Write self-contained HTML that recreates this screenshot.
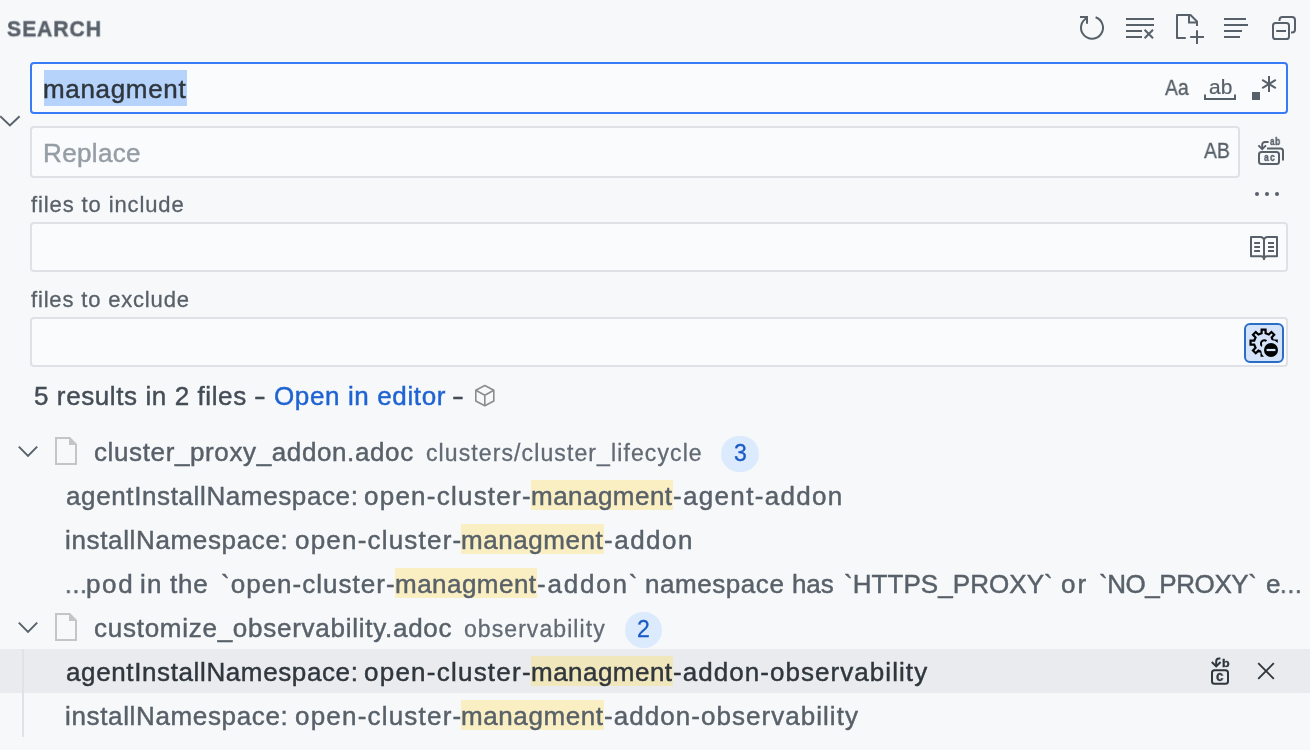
<!DOCTYPE html>
<html lang="en"><head><meta charset="utf-8"><title>Search</title>
<style>
html,body{margin:0;padding:0;}
body{width:1310px;height:750px;background:#f6f8fa;overflow:hidden;position:relative;font-family:"Liberation Sans",sans-serif;}
.b{position:absolute;box-sizing:border-box;display:block;}
.row{position:static;margin:0;padding:0;}
.t{display:block;position:absolute;white-space:pre;margin:0;will-change:transform;}
svg{overflow:visible;stroke-linecap:butt;}
</style></head><body>
<div class="t" style="left:6.60px;top:12.20px;font-size:22px;line-height:33px;color:#586069;transform:scale(0.9606,1.03);transform-origin:0 23.2px;font-weight:bold;-webkit-text-stroke:0.3px currentColor;-webkit-text-stroke:0.45px #586069;letter-spacing:1.0px;">SEARCH</div>
<svg class="b" style="left:1074px;top:10px" width="36" height="36" viewBox="1074 10 36 36" fill="none" stroke="#586069" stroke-width="2" ><path d="M1087.2 17.8A11 11 0 1 0 1095.6 17.3"/><path d="M1080 17H1087V23.8"/></svg>
<svg class="b" style="left:1122px;top:12px" width="36" height="30" viewBox="1122 12 36 30" fill="none" stroke="#586069" stroke-width="2" ><path d="M1126 19H1154M1126 25H1154M1126 31H1142M1126 37H1142"/><path d="M1144.6 29.8L1153 38.2M1153 29.8L1144.6 38.2"/></svg>
<svg class="b" style="left:1172px;top:10px" width="36" height="38" viewBox="1172 10 36 38" fill="none" stroke="#586069" stroke-width="2" ><path d="M1185.8 38H1177V15H1190.5L1197 21.5V26" stroke-linejoin="round"/><path d="M1189 15V22.5H1197"/><path d="M1190.2 37H1204M1197 30.2V44"/></svg>
<svg class="b" style="left:1220px;top:12px" width="32" height="30" viewBox="1220 12 32 30" fill="none" stroke="#586069" stroke-width="2" ><path d="M1224 19H1246M1224 25H1248M1224 31H1242M1224 37H1240"/></svg>
<svg class="b" style="left:1268px;top:12px" width="32" height="32" viewBox="1268 12 32 32" fill="none" stroke="#586069" stroke-width="2" ><path d="M1279.5 21V20A3 3 0 0 1 1282.5 17H1292A3 3 0 0 1 1295 20V29.5A3 3 0 0 1 1292 32.5H1291"/><rect x="1273" y="23" width="16" height="16" rx="2.6"/><path d="M1276.2 31H1286"/></svg>
<svg class="b" style="left:0px;top:110px" width="22" height="22" viewBox="0 110 22 22" fill="none" stroke="#586069" stroke-width="1.9" ><path d="M0.2 116.2L9.9 125.4L19.600 116.2"/></svg>
<div class="b" style="left:30px;top:62px;width:1258px;height:52px;background:#fafbfc;border:2px solid #377cf6;border-radius:4px;"></div>
<div class="b" style="left:44px;top:70px;width:143px;height:36px;background:#b5d3fb;"></div>
<div class="t " style="left:43.38px;top:70.30px;font-size:26px;line-height:39px;letter-spacing:0.672px;color:#2f363d;-webkit-text-stroke:0.45px currentColor;">managment</div>
<div class="t" style="left:1164.60px;top:71.40px;font-size:22px;line-height:33px;color:#586069;transform:scale(0.8781,1.0);transform-origin:0 23.2px;-webkit-text-stroke:0.3px currentColor;">Aa</div>
<div class="t" style="left:1208.52px;top:72.20px;font-size:20px;line-height:30px;color:#586069;transform:scale(1.0458,1.0);transform-origin:0 21.2px;-webkit-text-stroke:0.2px currentColor;">ab</div>
<svg class="b" style="left:1200px;top:90px" width="40" height="14" viewBox="1200 90 40 14" fill="none" stroke="#586069" stroke-width="2" ><path d="M1205 94.4V99H1235V94.4"/></svg>
<div class="b" style="left:1252px;top:92px;width:8px;height:8px;background:#586069;"></div>
<svg class="b" style="left:1258px;top:72px" width="22" height="24" viewBox="1258 72 22 24" fill="none" stroke="#586069" stroke-width="2" ><path d="M1269 76V92M1262.2 79.8L1275.8 88.2M1275.8 79.8L1262.2 88.2"/></svg>
<div class="b" style="left:30px;top:126px;width:1210px;height:52px;background:#fafbfc;border:2px solid #dfe1e6;border-radius:4px;"></div>
<div class="t " style="left:43.48px;top:134.30px;font-size:26px;line-height:39px;letter-spacing:0.358px;color:#959da5;-webkit-text-stroke:0.45px currentColor;">Replace</div>
<div class="t" style="left:1204.20px;top:134.20px;font-size:22px;line-height:33px;color:#586069;transform:scale(0.8779,1.0);transform-origin:0 23.2px;-webkit-text-stroke:0.3px currentColor;">AB</div>
<svg class="b" style="left:1254px;top:134px" width="34" height="34" viewBox="1254 134 34 34" fill="none" stroke="#586069" stroke-width="2" ><rect x="1259" y="152" width="20" height="12" rx="2.5"/><path d="M1267 148.5H1280.5A2.5 2.5 0 0 1 1283 151V160.5"/><path d="M1268.6 142H1265A2.8 2.8 0 0 0 1262.2 144.8V149"/><path d="M1258.4 145.4L1262.2 149.2L1266 145.4"/></svg>
<div class="row"><span class="t" style="left:1270.00px;top:134.00px;font-size:10px;line-height:15px;color:#586069;transform:scale(0.8186,1.0);transform-origin:0 10.2px;font-weight:bold;-webkit-text-stroke:0.3px currentColor;">a</span><span class="t" style="left:1275.26px;top:134.00px;font-size:10px;line-height:15px;color:#586069;transform:scale(0.8585,1.0);transform-origin:0 10.2px;font-weight:bold;-webkit-text-stroke:0.3px currentColor;">b</span></div>
<div class="row"><span class="t" style="left:1264.01px;top:149.40px;font-size:11px;line-height:16px;color:#586069;transform:scale(0.7667,1.0);transform-origin:0 11.2px;font-weight:bold;-webkit-text-stroke:0.3px currentColor;">a</span><span class="t" style="left:1269.90px;top:149.40px;font-size:11px;line-height:16px;color:#586069;transform:scale(0.8000,1.0);transform-origin:0 11.2px;font-weight:bold;-webkit-text-stroke:0.3px currentColor;">c</span></div>
<svg class="b" style="left:1250px;top:188px" width="34" height="12" viewBox="1250 188 34 12" fill="#586069" stroke="#586069" stroke-width="0" style2=""><circle cx="1257" cy="194" r="2"/><circle cx="1267" cy="194" r="2"/><circle cx="1277" cy="194" r="2"/></svg>
<div class="t " style="left:30.55px;top:188.20px;font-size:22px;line-height:33px;letter-spacing:0.882px;color:#586069;-webkit-text-stroke:0.3px currentColor;">files to include</div>
<div class="b" style="left:30px;top:222px;width:1258px;height:50px;background:#fafbfc;border:2px solid #dfe1e6;border-radius:4px;"></div>
<svg class="b" style="left:1246px;top:232px" width="36" height="32" viewBox="1246 232 36 32" fill="none" stroke="#586069" stroke-width="2" ><path d="M1264 240.5V259"/><path d="M1251 237H1260.5A3.5 3.500 0 0 1 1264 240.500A3.5 3.500 0 0 1 1267.5 237H1277V256.300H1267A3 3 0 0 0 1264 259.300A3 3 0 0 0 1261 256.300H1251Z" stroke-linejoin="round"/><path d="M1254.200 243H1260M1254.200 247H1260M1254.200 251H1260M1268 243H1274M1268 247H1274M1268 251H1274"/></svg>
<div class="t " style="left:30.55px;top:283.20px;font-size:22px;line-height:33px;letter-spacing:0.828px;color:#586069;-webkit-text-stroke:0.3px currentColor;">files to exclude</div>
<div class="b" style="left:30px;top:317px;width:1258px;height:50px;background:#fafbfc;border:2px solid #dfe1e6;border-radius:4px;"></div>
<div class="b" style="left:1244px;top:323px;width:40px;height:40px;background:#d4e3fa;border:2px solid #2a6dc4;border-radius:6px;"></div>
<svg class="b" style="left:1244px;top:323px" width="40" height="40" viewBox="1244 323 40 40" fill="none" stroke="#000" stroke-width="2.2"><defs><mask id="gm"><rect x="1244" y="323" width="40" height="40" fill="#fff"/><circle cx="1271" cy="350" r="8.800" fill="#000"/></mask></defs><g mask="url(#gm)"><path d="M1261.64 329.55L1265.56 329.55L1265.62 333.22L1268.81 334.54L1271.44 331.98L1274.22 334.76L1271.66 337.39L1272.98 340.58L1276.65 340.64L1276.65 344.56L1272.98 344.62L1271.66 347.81L1274.22 350.44L1271.44 353.22L1268.81 350.66L1265.62 351.98L1265.56 355.65L1261.64 355.65L1261.58 351.98L1258.39 350.66L1255.76 353.22L1252.98 350.44L1255.54 347.81L1254.22 344.62L1250.55 344.56L1250.55 340.64L1254.22 340.58L1255.54 337.39L1252.98 334.76L1255.76 331.98L1258.39 334.54L1261.58 333.22Z" stroke-linejoin="miter"/><path d="M1266.500 341.200A3.300 3.300 0 1 0 1262.200 346.200" stroke-width="2"/></g><circle cx="1271" cy="350" r="7" fill="#000" stroke="none"/><path d="M1266.600 350H1275.400" stroke="#d4e3fa" stroke-width="2.200"/></svg>
<div class="row"><span class="t " style="left:34.00px;top:376.90px;font-size:26px;line-height:39px;letter-spacing:0.595px;color:#444c56;-webkit-text-stroke:0.45px currentColor;">5 results in 2 files</span> <span class="t" style="left:254.08px;top:376.90px;font-size:26px;line-height:39px;color:#444c56;transform:scale(1.3538,1.0);transform-origin:0 27.7px;-webkit-text-stroke:0.45px currentColor;">-</span> <span class="t " style="left:273.68px;top:376.90px;font-size:26px;line-height:39px;letter-spacing:0.619px;color:#1f63d2;-webkit-text-stroke:0.45px currentColor;">Open in editor</span> <span class="t" style="left:452.36px;top:376.90px;font-size:26px;line-height:39px;color:#444c56;transform:scale(1.3692,1.0);transform-origin:0 27.7px;-webkit-text-stroke:0.45px currentColor;">-</span></div>
<svg class="b" style="left:470px;top:380px" width="30" height="32" viewBox="470 380 30 32" fill="none" stroke="#8c8c8c" stroke-width="1.6" ><path d="M484.800 385.500L493.800 390.300V401L484.800 405.800L475.800 401V390.300Z" stroke-linejoin="round"/><path d="M475.800 390.300L484.800 395.300L493.800 390.300M484.800 395.300V405.800" stroke-linejoin="round"/></svg>
<svg class="b" style="left:14px;top:439px" width="28" height="24" viewBox="14 439 28 24" fill="none" stroke="#586069" stroke-width="1.9" ><path d="M18.8 446.6L28 455.8L37.2 446.6"/></svg>
<svg class="b" style="left:52px;top:435px" width="28" height="32" viewBox="52 435 28 32" fill="none" stroke="#c5c5c5" stroke-width="2" ><path d="M56 438H69.600L76 444.4V464H56Z"/><path d="M69 438V445H76Z" fill="#c5c5c5" stroke="none"/></svg>
<div class="t " style="left:94.40px;top:432.70px;font-size:26px;line-height:39px;letter-spacing:0.618px;color:#586069;-webkit-text-stroke:0.45px currentColor;">cluster_proxy_addon.adoc</div>
<div class="t " style="left:425.52px;top:436.00px;font-size:23px;line-height:34px;letter-spacing:1.107px;color:#626a74;-webkit-text-stroke:0.3px currentColor;">clusters/cluster_lifecycle</div>
<div class="b" style="left:721px;top:435.6px;width:38px;height:36.0px;background:#dceafd;border-radius:18px;"></div>
<div class="t " style="left:733.62px;top:436.00px;font-size:23px;line-height:34px;letter-spacing:0.000px;color:#1a5ac4;-webkit-text-stroke:0.3px currentColor;">3</div>
<div class="b" style="left:531px;top:480px;width:142px;height:30px;background:#faefc3;"></div>
<div class="row"><span class="t " style="left:65.60px;top:477.10px;font-size:26px;line-height:39px;letter-spacing:0.618px;color:#586069;-webkit-text-stroke:0.45px currentColor;">agentInstallNamespace:</span> <span class="t " style="left:364.20px;top:477.10px;font-size:26px;line-height:39px;letter-spacing:1.237px;color:#586069;-webkit-text-stroke:0.45px currentColor;">open-cluster-</span><span class="t " style="left:530.77px;top:477.10px;font-size:26px;line-height:39px;letter-spacing:0.472px;color:#586069;-webkit-text-stroke:0.45px currentColor;">managment</span><span class="t " style="left:673.48px;top:477.10px;font-size:26px;line-height:39px;letter-spacing:1.327px;color:#586069;-webkit-text-stroke:0.45px currentColor;">-agent-addon</span></div>
<div class="b" style="left:461px;top:524px;width:142.60000000000002px;height:30px;background:#faefc3;"></div>
<div class="row"><span class="t " style="left:65.17px;top:521.10px;font-size:26px;line-height:39px;letter-spacing:0.644px;color:#586069;-webkit-text-stroke:0.45px currentColor;">installNamespace:</span> <span class="t " style="left:294.60px;top:521.10px;font-size:26px;line-height:39px;letter-spacing:1.204px;color:#586069;-webkit-text-stroke:0.45px currentColor;">open-cluster-</span><span class="t " style="left:460.77px;top:521.10px;font-size:26px;line-height:39px;letter-spacing:0.547px;color:#586069;-webkit-text-stroke:0.45px currentColor;">managment</span><span class="t " style="left:604.08px;top:521.10px;font-size:26px;line-height:39px;letter-spacing:1.510px;color:#586069;-webkit-text-stroke:0.45px currentColor;">-addon</span></div>
<div class="b" style="left:395px;top:568px;width:142px;height:30px;background:#faefc3;"></div>
<div class="row"><span class="t" style="left:64.09px;top:565.10px;font-size:26px;line-height:39px;color:#586069;transform:scale(0.9158,1.0);transform-origin:0 27.7px;-webkit-text-stroke:0.45px currentColor;">…</span><span class="t " style="left:86.38px;top:565.10px;font-size:26px;line-height:39px;letter-spacing:1.638px;color:#586069;-webkit-text-stroke:0.45px currentColor;">pod</span> <span class="t " style="left:140.18px;top:565.10px;font-size:26px;line-height:39px;letter-spacing:1.200px;color:#586069;-webkit-text-stroke:0.45px currentColor;">in</span> <span class="t " style="left:169.93px;top:565.10px;font-size:26px;line-height:39px;letter-spacing:0.837px;color:#586069;-webkit-text-stroke:0.45px currentColor;">the</span> <span class="t " style="left:220.95px;top:565.10px;font-size:26px;line-height:39px;letter-spacing:1.021px;color:#586069;-webkit-text-stroke:0.45px currentColor;">`open-cluster-</span><span class="t " style="left:394.77px;top:565.10px;font-size:26px;line-height:39px;letter-spacing:0.472px;color:#586069;-webkit-text-stroke:0.45px currentColor;">managment</span><span class="t " style="left:537.27px;top:565.10px;font-size:26px;line-height:39px;letter-spacing:1.796px;color:#586069;-webkit-text-stroke:0.45px currentColor;">-addon`</span> <span class="t " style="left:645.17px;top:565.10px;font-size:26px;line-height:39px;letter-spacing:0.556px;color:#586069;-webkit-text-stroke:0.45px currentColor;">namespace</span> <span class="t " style="left:791.65px;top:565.10px;font-size:26px;line-height:39px;letter-spacing:-0.125px;color:#586069;-webkit-text-stroke:0.45px currentColor;">has</span> <span class="t " style="left:843.75px;top:565.10px;font-size:26px;line-height:39px;letter-spacing:0.060px;color:#586069;-webkit-text-stroke:0.45px currentColor;">`HTTPS_PROXY`</span> <span class="t " style="left:1060.80px;top:565.10px;font-size:26px;line-height:39px;letter-spacing:2.050px;color:#586069;-webkit-text-stroke:0.45px currentColor;">or</span> <span class="t " style="left:1098.75px;top:565.10px;font-size:26px;line-height:39px;letter-spacing:-0.436px;color:#586069;-webkit-text-stroke:0.45px currentColor;">`NO_PROXY`</span> <span class="t " style="left:1265.60px;top:565.10px;font-size:26px;line-height:39px;letter-spacing:0.000px;color:#586069;-webkit-text-stroke:0.45px currentColor;">e</span><span class="t" style="left:1278.81px;top:565.10px;font-size:26px;line-height:39px;color:#586069;transform:scale(0.9105,1.0);transform-origin:0 27.7px;-webkit-text-stroke:0.45px currentColor;">…</span></div>
<svg class="b" style="left:14px;top:615px" width="28" height="24" viewBox="14 615 28 24" fill="none" stroke="#586069" stroke-width="1.9" ><path d="M18.8 622.6L28 631.8L37.2 622.6"/></svg>
<svg class="b" style="left:52px;top:611px" width="28" height="32" viewBox="52 611 28 32" fill="none" stroke="#c5c5c5" stroke-width="2" ><path d="M56 614H69.600L76 620.4V640H56Z"/><path d="M69 614V621H76Z" fill="#c5c5c5" stroke="none"/></svg>
<div class="t " style="left:94.40px;top:608.70px;font-size:26px;line-height:39px;letter-spacing:0.736px;color:#586069;-webkit-text-stroke:0.45px currentColor;">customize_observability.adoc</div>
<div class="t " style="left:463.52px;top:612.00px;font-size:23px;line-height:34px;letter-spacing:1.067px;color:#626a74;-webkit-text-stroke:0.3px currentColor;">observability</div>
<div class="b" style="left:625px;top:611.6px;width:37px;height:36.0px;background:#dceafd;border-radius:18px;"></div>
<div class="t " style="left:637.06px;top:612.00px;font-size:23px;line-height:34px;letter-spacing:0.000px;color:#1a5ac4;-webkit-text-stroke:0.3px currentColor;">2</div>
<div class="b" style="left:0px;top:649px;width:1310px;height:44px;background:#e9ebee;"></div>
<div class="b" style="left:22px;top:649px;width:2px;height:88px;background:#dfe2e6;"></div>
<div class="b" style="left:531px;top:656px;width:142px;height:30px;background:#f1e7bd;"></div>
<div class="row"><span class="t " style="left:65.60px;top:653.10px;font-size:26px;line-height:39px;letter-spacing:0.618px;color:#2f363d;-webkit-text-stroke:0.45px currentColor;">agentInstallNamespace:</span> <span class="t " style="left:364.20px;top:653.10px;font-size:26px;line-height:39px;letter-spacing:1.237px;color:#2f363d;-webkit-text-stroke:0.45px currentColor;">open-cluster-</span><span class="t " style="left:530.77px;top:653.10px;font-size:26px;line-height:39px;letter-spacing:0.472px;color:#2f363d;-webkit-text-stroke:0.45px currentColor;">managment</span><span class="t " style="left:673.48px;top:653.10px;font-size:26px;line-height:39px;letter-spacing:1.053px;color:#2f363d;-webkit-text-stroke:0.45px currentColor;">-addon-observability</span></div>
<div class="b" style="left:461px;top:700px;width:143px;height:30px;background:#faefc3;"></div>
<div class="row"><span class="t " style="left:65.17px;top:697.10px;font-size:26px;line-height:39px;letter-spacing:0.644px;color:#586069;-webkit-text-stroke:0.45px currentColor;">installNamespace:</span> <span class="t " style="left:294.60px;top:697.10px;font-size:26px;line-height:39px;letter-spacing:1.204px;color:#586069;-webkit-text-stroke:0.45px currentColor;">open-cluster-</span><span class="t " style="left:460.77px;top:697.10px;font-size:26px;line-height:39px;letter-spacing:0.597px;color:#586069;-webkit-text-stroke:0.45px currentColor;">managment</span><span class="t " style="left:604.48px;top:697.10px;font-size:26px;line-height:39px;letter-spacing:1.042px;color:#586069;-webkit-text-stroke:0.45px currentColor;">-addon-observability</span></div>
<svg class="b" style="left:1206px;top:654px" width="28" height="34" viewBox="1206 654 28 34" fill="none" stroke="#2f363d" stroke-width="2" ><rect x="1212" y="670.300" width="16" height="13.400" rx="2.500"/><path d="M1220.400 658.600H1219A2.800 2.800 0 0 0 1216.200 661.400V666"/><path d="M1211.800 662L1216.200 666.400L1220.600 662"/></svg>
<div class="t" style="left:1221.62px;top:656.30px;font-size:10px;line-height:15px;color:#2f363d;transform:scale(1.2488,1.0);transform-origin:0 10.2px;font-weight:bold;-webkit-text-stroke:0.3px currentColor;">b</div>
<div class="t" style="left:1216.33px;top:666.00px;font-size:14px;line-height:21px;color:#2f363d;transform:scale(0.9309,1.0);transform-origin:0 14.7px;font-weight:bold;-webkit-text-stroke:0.3px currentColor;">c</div>
<svg class="b" style="left:1252px;top:658px" width="28" height="28" viewBox="1252 658 28 28" fill="none" stroke="#2f363d" stroke-width="1.9" ><path d="M1258.200 663.200L1273.800 678.800M1273.800 663.200L1258.200 678.800"/></svg>
</body></html>
